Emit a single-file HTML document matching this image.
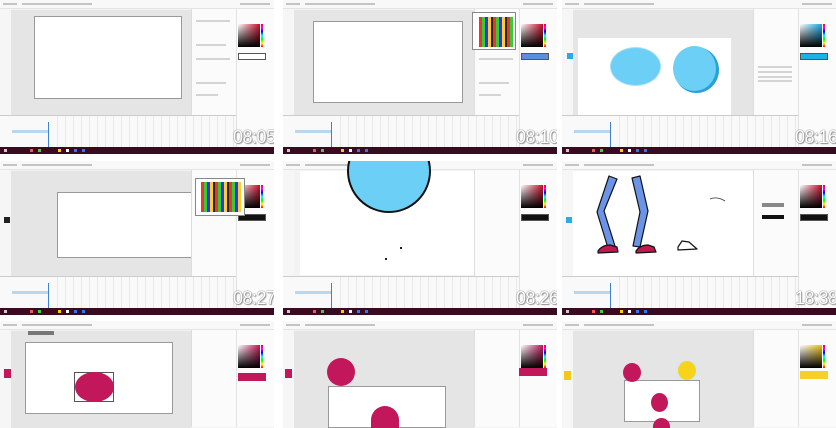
<!DOCTYPE html>
<html style="width:836px;height:428px;overflow:hidden"><head><meta charset="utf-8"><style>
*{margin:0;padding:0;box-sizing:border-box}
body{width:836px;height:428px;background:#fff;position:relative;overflow:hidden;font-family:"Liberation Sans",sans-serif}
.c{position:absolute;width:274px;height:154px;background:#f3f3f3;overflow:hidden}
.c div{position:absolute}
.mb{left:0;top:0;width:274px;height:9px;background:#f8f8f8;border-bottom:1px solid #e4e4e4}
.mb i{position:absolute;top:3px;height:2px;background:#c4c4c4}
.tb{left:0;top:9px;width:11px;height:106px;background:#f6f6f6}
.ca{left:11px;top:10px;width:180px;height:105px;background:#e5e5e5}
.rp{left:191px;top:9px;width:45px;height:106px;background:#fbfbfb;border-left:1px solid #ddd}
.cp{left:236px;top:9px;width:38px;height:138px;background:#fbfbfb;border-left:1px solid #e2e2e2}
.pk{left:238px;top:24px;width:22px;height:23px;background:linear-gradient(to bottom,rgba(0,0,0,0),#000),linear-gradient(to right,#fff,#c8102e)}
.hs{left:261px;top:24px;width:2px;height:23px;background:linear-gradient(#f00,#f0f,#00f,#0ff,#0f0,#ff0,#f00)}
.sw{left:238px;top:53px;width:28px;height:7px;border:1px solid #555}
.tl{left:0;top:115px;width:236px;height:32px;background:#f9f9f9;border-top:1px solid #ccc;background-image:repeating-linear-gradient(to right,transparent 0 7px,#e8e8e8 7px 8px);background-position:50px 0}
.ly{left:0;top:116px;width:48px;height:31px;background:#f9f9f9}
.hl{left:12px;top:130px;width:36px;height:3px;background:#b8d6f0}
.ph{left:48px;top:122px;width:1px;height:25px;background:#3b82d6}
.tk{left:0;top:147px;width:274px;height:7px;background:#3a0b20}
.tk i{position:absolute;top:2px;width:3px;height:3px}
.ts{left:233px;top:127px;font-size:18px;color:#fff;letter-spacing:-0.5px;text-shadow:0 0 1px #777,0 0 1px #777,1px 1px 1px #999}
.doc{background:#fff;border:1px solid #999}
.row{height:2px;background:#d4d4d4}
.r3{height:107px}
.r3 .ca,.r3 .rp,.r3 .cp{height:97px}
</style></head><body>

<div class="c" style="left:0;top:0">
<div class="mb"><i style="left:3px;width:14px"></i><i style="left:22px;width:70px"></i><i style="left:240px;width:30px"></i></div>
<div class="tb"></div><div class="ca"></div>
<div class="doc" style="left:34px;top:16px;width:148px;height:83px"></div>
<div class="rp"></div><div class="cp"></div><div class="pk"></div><div class="hs"></div>
<div class="sw" style="background:#fff"></div>
<div class="row" style="left:196px;top:20px;width:34px"></div><div class="row" style="left:196px;top:44px;width:30px"></div><div class="row" style="left:196px;top:58px;width:34px"></div><div class="row" style="left:196px;top:82px;width:30px"></div><div class="row" style="left:196px;top:94px;width:22px"></div>
<div class="tl"></div><div class="ly"></div><div class="hl"></div><div class="ph"></div>
<div class="tk"><i style="left:4px;background:#ccc"></i><i style="left:30px;background:#e55"></i><i style="left:38px;background:#4c4"></i><i style="left:58px;background:#fc0"></i><i style="left:66px;background:#fff"></i><i style="left:74px;background:#37e"></i><i style="left:82px;background:#37e"></i></div>
<div class="ts">08:05</div>
</div>

<div class="c" style="left:283px;top:0">
<div class="mb"><i style="left:3px;width:14px"></i><i style="left:22px;width:70px"></i><i style="left:240px;width:30px"></i></div>
<div class="tb"></div><div class="ca"></div>
<div class="doc" style="left:30px;top:21px;width:150px;height:82px"></div>
<div class="rp"></div><div class="cp"></div><div class="pk"></div><div class="hs"></div>
<div class="sw" style="background:#5a8fe0"></div>
<div style="left:189px;top:12px;width:44px;height:38px;background:#fff;border:1px solid #888"><div style="left:6px;top:4px;width:34px;height:30px;background:repeating-linear-gradient(to right,#e33 0 3px,#3c3 3px 6px,#33e 6px 9px,#fc3 9px 12px,#222 12px 14px)"></div></div>
<div class="row" style="left:196px;top:58px;width:34px"></div><div class="row" style="left:196px;top:82px;width:30px"></div><div class="row" style="left:196px;top:94px;width:22px"></div>
<div class="tl"></div><div class="ly"></div><div class="hl"></div><div class="ph"></div>
<div class="tk"><i style="left:4px;background:#ccc"></i><i style="left:30px;background:#e55"></i><i style="left:38px;background:#4c4"></i><i style="left:58px;background:#fc0"></i><i style="left:66px;background:#fff"></i><i style="left:74px;background:#37e"></i><i style="left:82px;background:#37e"></i></div>
<div class="ts">08:10</div>
</div>

<div class="c" style="left:562px;top:0">
<div class="mb"><i style="left:3px;width:14px"></i><i style="left:22px;width:70px"></i><i style="left:240px;width:30px"></i></div>
<div class="tb"></div><div class="ca"></div>
<div style="left:16px;top:38px;width:153px;height:77px;background:#fff"></div>
<div style="left:48px;top:47px;width:51px;height:39px;border-radius:50%;background:#6ccff5;border:1px solid #a8ddf3"></div>
<div style="left:112px;top:47px;width:45px;height:46px;border-radius:50%;background:#2aa1d6"></div>
<div style="left:111px;top:46px;width:43px;height:45px;border-radius:50%;background:#6ccff5"></div>
<div style="left:5px;top:53px;width:6px;height:6px;background:#2aaae6"></div>
<div class="rp"></div><div class="cp"></div><div class="pk" style="background:linear-gradient(to bottom,rgba(0,0,0,0),#000),linear-gradient(to right,#fff,#1aa7e6)"></div><div class="hs"></div>
<div class="sw" style="background:#1fb0ea"></div>
<div class="row" style="left:196px;top:66px;width:34px"></div><div class="row" style="left:196px;top:71px;width:34px"></div><div class="row" style="left:196px;top:76px;width:34px"></div><div class="row" style="left:196px;top:80px;width:34px"></div>
<div class="tl"></div><div class="ly"></div><div class="hl"></div><div class="ph"></div>
<div class="tk"><i style="left:4px;background:#ccc"></i><i style="left:30px;background:#e55"></i><i style="left:38px;background:#4c4"></i><i style="left:58px;background:#fc0"></i><i style="left:66px;background:#fff"></i><i style="left:74px;background:#37e"></i><i style="left:82px;background:#37e"></i></div>
<div class="ts">08:16</div>
</div>

<div class="c" style="left:0;top:161px">
<div class="mb"><i style="left:3px;width:14px"></i><i style="left:22px;width:70px"></i><i style="left:240px;width:30px"></i></div>
<div class="tb"></div><div class="ca"></div>
<div class="doc" style="left:57px;top:31px;width:147px;height:66px"></div>
<div class="rp"></div><div class="cp"></div><div class="pk"></div><div class="hs"></div>
<div class="sw" style="background:#111"></div>
<div style="left:195px;top:17px;width:50px;height:38px;background:#fff;border:1px solid #888"><div style="left:5px;top:3px;width:40px;height:30px;background:repeating-linear-gradient(to right,#e33 0 3px,#3c3 3px 6px,#33e 6px 9px,#fc3 9px 12px,#222 12px 14px)"></div></div>
<div style="left:4px;top:56px;width:6px;height:6px;background:#222"></div>
<div class="tl"></div><div class="ly"></div><div class="hl"></div><div class="ph"></div>
<div class="tk"><i style="left:4px;background:#ccc"></i><i style="left:30px;background:#e55"></i><i style="left:38px;background:#4c4"></i><i style="left:58px;background:#fc0"></i><i style="left:66px;background:#fff"></i><i style="left:74px;background:#37e"></i><i style="left:82px;background:#37e"></i></div>
<div class="ts">08:27</div>
</div>

<div class="c" style="left:283px;top:161px">
<div class="mb"><i style="left:3px;width:14px"></i><i style="left:22px;width:70px"></i><i style="left:240px;width:30px"></i></div>
<div class="tb"></div>
<div style="left:17px;top:10px;width:174px;height:104px;background:#fff"></div>
<div style="left:64px;top:-32px;width:84px;height:84px;border-radius:50%;background:#6ccff5;border:2px solid #111"></div>
<div style="left:117px;top:86px;width:2px;height:2px;background:#222"></div><div style="left:102px;top:97px;width:2px;height:2px;background:#222"></div>
<div class="rp"></div><div class="cp"></div><div class="pk"></div><div class="hs"></div>
<div class="sw" style="background:#111"></div>
<div class="tl"></div><div class="ly"></div><div class="hl"></div><div class="ph"></div>
<div class="tk"><i style="left:4px;background:#ccc"></i><i style="left:30px;background:#e55"></i><i style="left:38px;background:#4c4"></i><i style="left:58px;background:#fc0"></i><i style="left:66px;background:#fff"></i><i style="left:74px;background:#37e"></i><i style="left:82px;background:#37e"></i></div>
<div class="ts">08:26</div>
</div>

<div class="c" style="left:562px;top:161px">
<div class="mb"><i style="left:3px;width:14px"></i><i style="left:22px;width:70px"></i><i style="left:240px;width:30px"></i></div>
<div class="tb"></div>
<div style="left:11px;top:10px;width:180px;height:105px;background:#fff"></div>
<svg style="position:absolute;left:0;top:0" width="190" height="115">
<g stroke="#111" stroke-width="1.2" stroke-linejoin="round">
<polygon points="47,15 55,18 42,50 53,85 46,87 35,51" fill="#6b94e8"/>
<polygon points="70,17 78,15 86,50 78,86 71,85 78,51" fill="#6b94e8"/>
<path d="M36,90 Q40,84 48,84 L55,86 L56,91 L36,92 Z" fill="#c2184f"/>
<path d="M74,90 Q78,84 86,84 L92,86 L94,91 L74,92 Z" fill="#c2184f"/>
<path d="M116,86 L120,80 L127,81 L135,88 L116,89 Z" fill="#fff"/>
</g>
<path d="M148,38 Q155,35 163,40" stroke="#333" fill="none" stroke-width="0.8"/>
</svg>
<div class="rp"></div><div class="cp"></div><div class="pk"></div><div class="hs"></div>
<div class="sw" style="background:#111"></div>
<div style="left:200px;top:42px;width:22px;height:4px;background:#888"></div><div style="left:200px;top:54px;width:22px;height:4px;background:#111"></div>
<div style="left:4px;top:56px;width:6px;height:6px;background:#2aaae6"></div>
<div class="tl"></div><div class="ly"></div><div class="hl"></div><div class="ph"></div>
<div class="tk"><i style="left:4px;background:#ccc"></i><i style="left:30px;background:#e55"></i><i style="left:38px;background:#4c4"></i><i style="left:58px;background:#fc0"></i><i style="left:66px;background:#fff"></i><i style="left:74px;background:#37e"></i><i style="left:82px;background:#37e"></i></div>
<div class="ts">18:38</div>
</div>

<div class="c r3" style="left:0;top:321px">
<div class="mb"><i style="left:3px;width:14px"></i><i style="left:22px;width:70px"></i><i style="left:240px;width:30px"></i></div>
<div class="tb"></div><div class="ca"></div>
<div style="left:28px;top:10px;width:26px;height:4px;background:#777"></div>
<div class="doc" style="left:25px;top:21px;width:148px;height:72px"></div>
<div style="left:74px;top:51px;width:40px;height:30px;border:1px solid #555"></div>
<div style="left:75px;top:51px;width:39px;height:30px;border-radius:50%;background:#c2185b"></div>
<div style="left:4px;top:48px;width:7px;height:9px;background:#c2185b"></div>
<div class="rp"></div><div class="cp"></div><div class="pk" style="background:linear-gradient(to bottom,rgba(0,0,0,0),#000),linear-gradient(to right,#fff,#c2185b)"></div><div class="hs"></div>
<div style="left:238px;top:52px;width:28px;height:8px;background:#c2185b"></div>
</div>

<div class="c r3" style="left:283px;top:321px">
<div class="mb"><i style="left:3px;width:14px"></i><i style="left:22px;width:70px"></i><i style="left:240px;width:30px"></i></div>
<div class="tb"></div><div class="ca"></div>
<div class="doc" style="left:45px;top:65px;width:118px;height:42px"></div>
<div style="left:44px;top:37px;width:28px;height:28px;border-radius:50%;background:#c2185b"></div>
<div style="left:88px;top:85px;width:28px;height:22px;border-radius:14px 14px 0 0;background:#c2185b"></div>
<div style="left:2px;top:48px;width:7px;height:9px;background:#c2185b"></div>
<div class="rp"></div><div class="cp"></div><div class="pk" style="background:linear-gradient(to bottom,rgba(0,0,0,0),#000),linear-gradient(to right,#fff,#c2185b)"></div><div class="hs"></div>
<div style="left:236px;top:47px;width:28px;height:8px;background:#c2185b"></div>
</div>

<div class="c r3" style="left:562px;top:321px">
<div class="mb"><i style="left:3px;width:14px"></i><i style="left:22px;width:70px"></i><i style="left:240px;width:30px"></i></div>
<div class="tb"></div><div class="ca"></div>
<div class="doc" style="left:62px;top:59px;width:76px;height:42px"></div>
<div style="left:61px;top:42px;width:18px;height:19px;border-radius:50%;background:#c2185b"></div>
<div style="left:115px;top:40px;width:20px;height:19px;background:#d9e7f3"></div>
<div style="left:116px;top:40px;width:18px;height:19px;border-radius:50%;background:#f7d31b"></div>
<div style="left:89px;top:72px;width:17px;height:19px;border-radius:50%;background:#c2185b"></div>
<div style="left:91px;top:97px;width:17px;height:10px;border-radius:9px 9px 0 0;background:#c2185b"></div>
<div style="left:2px;top:50px;width:7px;height:9px;background:#f7c61b"></div>
<div class="rp"></div><div class="cp"></div><div class="pk" style="background:linear-gradient(to bottom,rgba(0,0,0,0),#000),linear-gradient(to right,#fff,#e8c21a)"></div><div class="hs"></div>
<div style="left:238px;top:50px;width:28px;height:8px;background:#f5cf2a"></div>
</div>

</body></html>
